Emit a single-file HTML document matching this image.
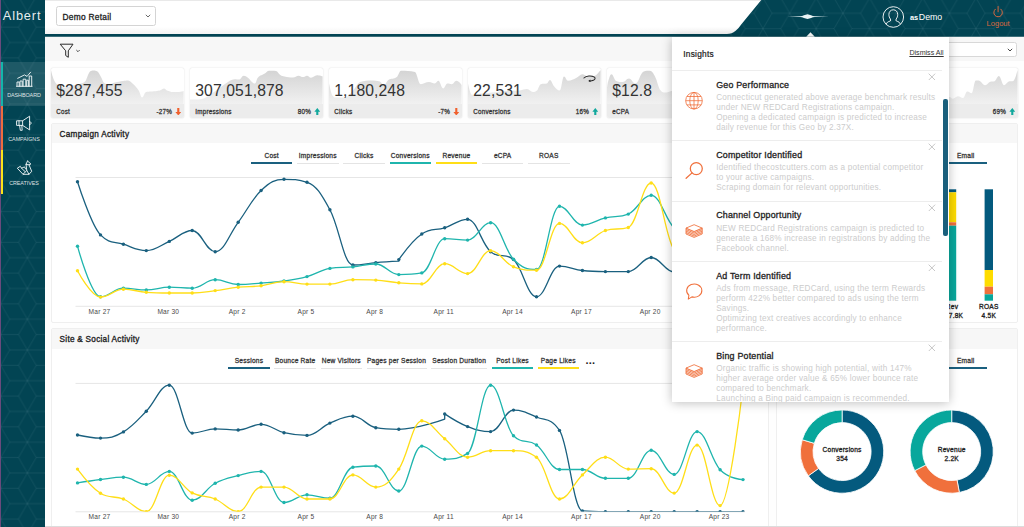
<!DOCTYPE html><html><head><meta charset="utf-8"><title>Albert</title><style>
*{box-sizing:border-box;margin:0;padding:0}
html,body{width:1024px;height:527px;overflow:hidden;background:#fefefe;font-family:"Liberation Sans",sans-serif;color:#222}
.abs{position:absolute}
#side{position:absolute;left:0;top:0;width:45px;height:527px;background:#024453}
#side .strip{position:absolute;left:0;top:0;width:0.9px;height:527px;background:#6a4a7c}
.nav{position:absolute;left:0;width:45px;height:44px}
.nav .bar{position:absolute;left:0.7px;top:0;width:2.7px;height:44px}
.nav .nl{position:absolute;left:3px;width:42px;text-align:center;top:30.2px;font-size:5.4px;line-height:6px;color:rgba(255,255,255,0.86);letter-spacing:-0.05px}
.nav svg{position:absolute;left:14.5px;top:9px;width:19px;height:19px}
#logo{position:absolute;left:2.8px;top:8.7px;font-size:12.8px;line-height:14px;color:rgba(255,255,255,0.92);letter-spacing:0.85px}
#hdr{position:absolute;left:45px;top:0;width:979px;height:37px;background:linear-gradient(#fff 0,#fff 26px,#f1f1f1 34px);border-top:1px solid #e9e9e9}
#hbar{position:absolute;left:45px;top:33.6px;width:700px;height:3px;background:#024453}
#sel1{position:absolute;left:56px;top:6.3px;width:100px;height:19.5px;border:1px solid #d4d4d4;border-radius:2.5px;background:#fff;font-size:8.35px;font-weight:normal;-webkit-text-stroke:0.3px;letter-spacing:0.28px;line-height:20px;padding-left:5.5px;color:#222}
#sel2{position:absolute;left:930px;top:42px;width:86.5px;height:14.5px;border:1px solid #d8d8d8;border-radius:2.5px;background:#fff}
#fbar{position:absolute;left:45px;top:37px;width:979px;height:24.2px;background:#f7f7f7}
.card{position:absolute;top:67.5px;width:132.6px;height:50.5px;background:#fff;border-radius:2px;overflow:hidden;box-shadow:0 0 1.5px rgba(0,0,0,.18)}
.card .sp{position:absolute;left:0;top:0;width:132.6px;height:36px}
.card .ft{position:absolute;left:0;top:36.2px;width:100%;height:14.5px;background:#ececec}
.card .val{position:absolute;left:5.3px;top:14.7px;font-size:15.7px;line-height:18px;color:#333;letter-spacing:0.1px}
.card .lb{position:absolute;left:5.3px;top:4.5px;font-size:6.3px;font-weight:normal;-webkit-text-stroke:0.27px;letter-spacing:0.21px;color:#333;line-height:8px}
.card .pc{position:absolute;right:11.5px;top:4.5px;font-size:6.3px;font-weight:normal;-webkit-text-stroke:0.27px;letter-spacing:0.21px;color:#333;line-height:8px}
.card .ar{position:absolute;right:1.6px;top:4.1px;width:6.6px;height:7.5px}
.card .redo{position:absolute;left:114.5px;top:7px;width:13px;height:7.5px}
.panel{position:absolute;background:#fff;border:1px solid #efefef;border-radius:2px}
.panel .ph{position:absolute;left:0;top:0;right:0;height:19.5px;background:#f7f7f7;font-size:8.2px;font-weight:normal;-webkit-text-stroke:0.32px;letter-spacing:0.27px;line-height:21px;padding-left:8px;color:#222}
.tab{position:absolute;height:15.3px;text-align:center;font-size:6.6px;font-weight:normal;-webkit-text-stroke:0.27px;letter-spacing:0.22px;color:#333;line-height:13px;border-bottom:1px solid #e4e4e4;white-space:nowrap}
.tab.on{border-bottom-width:2.1px;border-bottom-style:solid}
svg text{font-family:"Liberation Sans",sans-serif}
#pop{position:absolute;left:671.7px;top:36.5px;width:277.8px;height:365.5px;background:#fff;box-shadow:0 1px 10px rgba(0,0,0,.26);overflow:hidden}
#pop .pt{position:absolute;left:11.5px;top:12px;font-size:8.3px;font-weight:normal;-webkit-text-stroke:0.22px;letter-spacing:0.27px;color:#222;line-height:10px}
#pop .da{position:absolute;right:5.8px;top:12.9px;font-size:7.1px;color:#333;text-decoration:underline;line-height:9px}
#pop .list{position:absolute;left:0;top:33.5px;width:270.3px;height:340px;border-top:1px solid #ededed}
.it{position:absolute;left:0;width:270.3px;border-bottom:1px solid #ededed}
.it .ic{position:absolute;left:12px;top:19.5px;width:20px;height:20px}
.it .x{position:absolute;left:256.4px;top:1.5px;width:7.8px;height:7.8px}
.it .x svg{width:7.8px;height:7.8px;display:block}
.it .tt{position:absolute;left:44.5px;top:7.8px;font-size:8.9px;font-weight:normal;-webkit-text-stroke:0.3px;color:#222;line-height:12px;letter-spacing:0.2px}
.it .ds{position:absolute;left:44.5px;top:22px;font-size:8.2px;line-height:10px;color:#cccccc;white-space:nowrap;letter-spacing:0.21px}
#sb{position:absolute;left:271.8px;top:62.5px;width:4.2px;height:137px;background:#1a5f7c;border-radius:2px}
</style></head><body><svg width="0" height="0" style="position:absolute"><defs><linearGradient id="spg" x1="0" y1="0" x2="0" y2="1"><stop offset="0" stop-color="#d4d4d4"/><stop offset="1" stop-color="#f1f1f1"/></linearGradient></defs></svg><div id="hdr"></div><div id="fbar"></div><svg class="abs" style="left:0;top:0" width="1024" height="38"><defs><pattern id="hp2" patternUnits="userSpaceOnUse" width="53.250" height="30.744" patternTransform="translate(842.90 13.30)"><path d="M0.00 0.00 L17.75 0.00 M0.00 0.00 L8.88 15.37 M0.00 0.00 L-8.87 15.37 M0.00 0.00 L-17.75 0.00 M0.00 0.00 L-8.88 -15.37 M0.00 0.00 L8.88 -15.37 M53.25 0.00 L71.00 0.00 M53.25 0.00 L62.12 15.37 M53.25 0.00 L44.38 15.37 M53.25 0.00 L35.50 0.00 M53.25 0.00 L44.37 -15.37 M53.25 0.00 L62.12 -15.37 M0.00 30.74 L17.75 30.74 M0.00 30.74 L8.88 46.12 M0.00 30.74 L-8.87 46.12 M0.00 30.74 L-17.75 30.74 M0.00 30.74 L-8.88 15.37 M0.00 30.74 L8.88 15.37 M53.25 30.74 L71.00 30.74 M53.25 30.74 L62.12 46.12 M53.25 30.74 L44.38 46.12 M53.25 30.74 L35.50 30.74 M53.25 30.74 L44.37 15.37 M53.25 30.74 L62.12 15.37 M26.62 15.37 L44.38 15.37 M26.62 15.37 L35.50 30.74 M26.62 15.37 L17.75 30.74 M26.62 15.37 L8.88 15.37 M26.62 15.37 L17.75 0.00 M26.62 15.37 L35.50 0.00 " stroke="#8fb8c0" stroke-opacity="0.2" stroke-width="0.55" fill="none"/></pattern></defs><path id="hshape" d="M761.3 0 L1024 0 L1024 36.8 L45 36.8 L45 34 L727 34 C734 34 737.5 29.5 741.6 24 Z" fill="#024453"/><path d="M761.3 0 L1024 0 L1024 36.8 L727 36.8 L727 34 C734 34 737.5 29.5 741.6 24 Z" fill="url(#hp2)"/><path d="M806.2 36.8 L810.5 32.3 L814.8 36.8 Z" fill="#fff"/><path d="M787.5 16.6 L800 16.2 C803 16 805 14.6 807.5 14.2 C810 14.6 812 16 815 16.2 L829 16.6 L815 17.1 C812 17.3 810 18.7 807.5 19.1 C805 18.7 803 17.3 800 17.1 Z" fill="#e9f3f5"/><g fill="none" stroke="#fff" stroke-width="0.9"><circle cx="893.3" cy="17" r="10.3"/><path d="M886.3 24.3c0.3-2 1.8-2.6 4-3.3 0.5-0.5 0.5-1.3 0.1-2-1-1.3-1.5-2.8-1.5-4.5 0-2.7 1.7-4.7 4.4-4.7s4.4 2 4.4 4.7c0 1.7-0.5 3.2-1.5 4.5-0.4 0.7-0.4 1.5 0.1 2 2.2 0.7 3.7 1.3 4 3.3"/></g><text x="909.9" y="19.9" font-size="7.4" font-weight="bold" fill="#fff" letter-spacing="-0.1">as</text><text x="918.8" y="19.9" font-size="8.8" fill="#fff">Demo</text><g fill="none" stroke="#d9683f" stroke-width="1" stroke-linecap="round"><path d="M995.3 9.2a4.3 4.3 0 1 0 5.6 0M998.1 6.5v5.3"/></g><text x="998.1" y="26" font-size="7.6" fill="#d9683f" text-anchor="middle">Logout</text></svg><div id="sel1">Demo Retail<svg class="abs" style="left:88px;top:6.5px" width="6" height="4" viewBox="0 0 6 4"><path d="M0.8 0.8L3 3l2.2-2.2" fill="none" stroke="#444" stroke-width="0.8"/></svg></div><div id="sel2"><svg class="abs" style="left:76.3px;top:5px" width="6" height="4" viewBox="0 0 6 4"><path d="M0.8 0.8L3 3l2.2-2.2" fill="none" stroke="#333" stroke-width="0.9"/></svg></div><svg class="abs" style="left:58.2px;top:41.6px" width="26" height="18" viewBox="0 0 26 18"><path d="M2.2 2.2h12.8L10.3 8.8v6.5L7.7 13.5V8.8z" fill="none" stroke="#2a2a2a" stroke-width="1" stroke-linejoin="round"/><path d="M18.3 8l1.7 1.7 1.7-1.7" fill="none" stroke="#333" stroke-width="0.85"/></svg><div id="side"><svg class="abs" style="left:0;top:0" width="45" height="527"><defs><pattern id="hp1" patternUnits="userSpaceOnUse" width="53.250" height="30.744" patternTransform="translate(27.40 11.80)"><path d="M0.00 0.00 L17.75 0.00 M0.00 0.00 L8.88 15.37 M0.00 0.00 L-8.87 15.37 M0.00 0.00 L-17.75 0.00 M0.00 0.00 L-8.88 -15.37 M0.00 0.00 L8.88 -15.37 M53.25 0.00 L71.00 0.00 M53.25 0.00 L62.12 15.37 M53.25 0.00 L44.38 15.37 M53.25 0.00 L35.50 0.00 M53.25 0.00 L44.37 -15.37 M53.25 0.00 L62.12 -15.37 M0.00 30.74 L17.75 30.74 M0.00 30.74 L8.88 46.12 M0.00 30.74 L-8.87 46.12 M0.00 30.74 L-17.75 30.74 M0.00 30.74 L-8.88 15.37 M0.00 30.74 L8.88 15.37 M53.25 30.74 L71.00 30.74 M53.25 30.74 L62.12 46.12 M53.25 30.74 L44.38 46.12 M53.25 30.74 L35.50 30.74 M53.25 30.74 L44.37 15.37 M53.25 30.74 L62.12 15.37 M26.62 15.37 L44.38 15.37 M26.62 15.37 L35.50 30.74 M26.62 15.37 L17.75 30.74 M26.62 15.37 L8.88 15.37 M26.62 15.37 L17.75 0.00 M26.62 15.37 L35.50 0.00 " stroke="#8fb8c0" stroke-opacity="0.2" stroke-width="0.55" fill="none"/></pattern></defs><rect width="45" height="527" fill="url(#hp1)"/></svg><div class="strip"></div><div id="logo">Albert</div><div class="nav" style="top:61.5px;background:rgba(255,255,255,0.115);"><div class="bar" style="background:#13b5ab"></div><div class="nl">DASHBOARD</div></div><div class="nav" style="top:105.5px;"><div class="bar" style="background:#ee6c3f"></div><div class="nl">CAMPAIGNS</div></div><div class="nav" style="top:149.5px;"><div class="bar" style="background:#fde21a"></div><div class="nl">CREATIVES</div></div><svg class="abs" style="left:0;top:0" width="45" height="200"><g fill="none" stroke="#f2f7f8" stroke-width="0.92" stroke-linejoin="round" stroke-linecap="round"><path d="M17 86.1V82h2.2v4.1M20 86.1V81h2.2v5.1M23.1 86.1V79.2h2.7v6.9M26.7 86.1V80.2h1.7v5.9M29.2 86.1V76h2.5v10.1M16.5 86.3h15.6"/><path d="M17.7 78.3L24.5 74.9L27.1 76.4L30.6 72.2"/><path d="M17 120.8h5.6v4.6H17zM19 120.8v4.6M22.6 120.8L29.6 116.2V129.9L22.6 125.4M29.6 121.6c2.2 0.2 2.2 2.8 0 3M19.6 125.4l0.7 4.9h1.9l-0.4-4.9"/><path d="M27.5 161L30.9 164L29 164.8L31.7 171.3L29 174.3L23 174.3L17.3 168.2L20.3 166.3L21.5 168.2L24.5 166.9L25.6 169M27.5 161L26 164.4L26.8 170.5L23 174.3M26.8 170.5L29 174.3M26 164.4L29 164.8M21.5 168.2L25 171.5"/></g></svg></div><div class="card" style="left:51px"><svg class="sp" viewBox="0 0 132.6 36" preserveAspectRatio="none"><path d="M0 36 L0.0 2.0 C0.0 2.0 0.9 6.2 1.5 8.0 C2.5 11.0 3.0 12.5 4.0 14.0 C5.6 16.3 6.4 16.6 8.0 17.5 C10.4 18.8 11.6 19.5 14.0 19.5 C17.2 19.5 18.8 18.3 22.0 17.5 C25.2 16.7 26.8 16.7 30.0 15.5 C31.8 14.9 32.7 15.2 34.5 13.0 C35.5 11.8 36.0 9.1 37.0 7.0 C37.8 5.3 38.2 4.5 39.0 3.5 C40.4 2.5 41.1 2.5 42.5 2.5 C44.1 2.5 44.9 2.5 46.5 3.5 C47.9 4.5 48.6 6.5 50.0 9.0 C51.2 11.1 51.8 13.5 53.0 15.0 C55.0 16.5 56.0 16.5 58.0 16.5 C60.4 16.5 61.6 15.1 64.0 14.5 C67.2 13.7 68.8 13.5 72.0 13.0 C74.0 12.7 75.0 12.5 77.0 12.5 C78.6 12.5 79.4 13.7 81.0 15.0 C82.6 16.3 83.4 17.2 85.0 19.0 C86.2 20.4 86.8 20.9 88.0 23.0 C89.2 25.1 89.8 29.5 91.0 29.5 C92.6 29.5 93.4 24.5 95.0 24.0 C97.0 23.5 98.0 23.7 100.0 23.5 C102.4 23.3 103.6 23.4 106.0 23.0 C107.6 22.8 108.4 22.6 110.0 22.0 C111.2 21.6 111.8 20.5 113.0 20.5 C114.2 20.5 114.8 22.0 116.0 22.5 C118.4 23.4 119.6 24.0 122.0 24.0 C124.4 24.0 125.6 24.0 128.0 24.0 C129.8 24.0 132.6 23.0 132.6 23.0 L132.6 36 Z" fill="url(#spg)"/></svg><div class="val">$287,455</div><div class="ft"><span class="lb">Cost</span><span class="pc">-27%</span><svg class="ar" viewBox="0 0 10 12"><path d="M3.3 0h3.4v6.2h3L5 12 0.3 6.2h3z" fill="#f0602d"/></svg></div></div><div class="card" style="left:190px"><svg class="sp" viewBox="0 0 132.6 36" preserveAspectRatio="none"><path d="M0 36 L0.0 31.6 C0.0 31.6 6.0 31.6 10.0 31.2 C15.6 30.8 18.4 27.4 24.0 24.0 C29.6 20.6 32.4 17.4 38.0 14.0 C40.8 12.3 42.2 11.3 45.0 11.3 C46.6 11.3 47.4 11.6 49.0 11.6 C50.9 11.6 51.8 7.7 53.7 7.7 C55.4 7.7 56.3 8.5 58.0 9.8 C59.6 11.0 60.4 12.7 62.0 14.0 C63.2 15.0 63.8 15.5 65.0 15.5 C66.1 15.5 66.7 10.9 67.8 9.8 C70.6 7.0 72.0 7.4 74.8 5.6 C76.5 4.6 77.3 2.8 79.0 2.8 C81.8 2.8 83.2 2.8 86.0 3.0 C87.7 3.2 88.6 5.9 90.3 7.0 C92.0 8.1 92.8 8.1 94.5 8.4 C97.9 9.1 99.6 9.6 103.0 9.6 C105.2 9.6 106.4 7.7 108.6 7.7 C110.4 7.7 111.2 9.1 113.0 9.1 C114.6 9.1 115.4 7.7 117.0 7.7 C118.6 7.7 119.4 9.8 121.0 9.8 C123.4 9.8 124.6 7.3 127.0 7.3 C129.2 7.3 132.6 8.4 132.6 8.4 L132.6 36 Z" fill="url(#spg)"/></svg><div class="val">307,051,878</div><div class="ft"><span class="lb">Impressions</span><span class="pc">80%</span><svg class="ar" viewBox="0 0 10 12"><path d="M3.3 12h3.4V5.8h3L5 0 0.3 5.8h3z" fill="#12a89d"/></svg></div></div><div class="card" style="left:329px"><svg class="sp" viewBox="0 0 132.6 36" preserveAspectRatio="none"><path d="M0 36 L0.0 15.5 C0.0 15.5 1.8 23.9 3.0 26.7 C4.7 29.5 5.6 29.5 7.3 29.5 C10.7 29.5 12.3 29.5 15.7 29.5 C19.0 29.5 20.7 25.9 24.0 22.5 C26.8 19.7 28.2 15.6 31.0 14.0 C35.6 12.4 37.9 12.4 42.5 12.4 C45.9 12.4 47.6 12.4 51.0 13.4 C52.6 14.4 53.4 16.9 55.0 16.9 C56.8 16.9 57.6 13.1 59.4 12.0 C62.8 10.0 64.4 11.6 67.8 9.1 C69.5 7.9 70.3 2.8 72.0 2.8 C77.6 2.8 80.4 2.8 86.0 3.9 C88.3 5.0 89.4 16.2 91.7 16.2 C95.0 16.2 96.7 14.0 100.0 14.0 C102.3 14.0 103.5 15.5 105.8 15.5 C107.2 15.5 107.9 12.7 109.3 12.7 C111.3 12.7 112.2 20.4 114.2 20.4 C115.9 20.4 116.7 15.5 118.4 15.5 C120.1 15.5 120.9 16.2 122.6 16.2 C124.6 16.2 125.6 12.7 127.6 12.7 C129.6 12.7 132.6 16.9 132.6 16.9 L132.6 36 Z" fill="url(#spg)"/></svg><div class="val">1,180,248</div><div class="ft"><span class="lb">Clicks</span><span class="pc">-7%</span><svg class="ar" viewBox="0 0 10 12"><path d="M3.3 0h3.4v6.2h3L5 12 0.3 6.2h3z" fill="#f0602d"/></svg></div></div><div class="card" style="left:468px"><svg class="sp" viewBox="0 0 132.6 36" preserveAspectRatio="none"><path d="M0 36 L0.0 15.5 C0.0 15.5 2.3 26.7 3.8 26.7 C6.3 26.7 7.5 26.3 10.0 26.0 C15.6 25.4 18.4 25.2 24.0 24.6 C29.6 24.0 32.4 23.4 38.0 23.0 C43.6 22.6 46.4 23.0 52.0 22.5 C54.8 22.0 56.2 21.0 59.0 21.0 C61.4 21.0 62.6 24.0 65.0 24.0 C66.6 24.0 67.4 24.0 69.0 22.5 C70.5 21.0 71.2 16.9 72.7 16.2 C75.2 15.5 76.5 16.2 79.0 15.5 C80.2 14.8 80.7 12.0 81.9 12.0 C83.5 12.0 84.4 16.5 86.0 18.3 C88.3 20.7 89.4 22.5 91.7 22.5 C93.4 22.5 94.3 8.4 96.0 8.4 C97.6 8.4 98.4 12.7 100.0 12.7 C103.4 12.7 105.2 11.4 108.6 9.8 C110.8 8.8 112.0 6.3 114.2 6.3 C116.4 6.3 117.6 8.4 119.8 8.4 C122.7 8.4 124.1 8.4 127.0 7.7 C129.2 7.0 132.6 2.1 132.6 2.1 L132.6 36 Z" fill="url(#spg)"/></svg><div class="val">22,531</div><svg class="redo" viewBox="0 0 14 8"><path d="M1 3.2C3.5 0.6 9 0.2 12.3 2.2c1.4 1 0.6 2.8-1.2 3.5-1.2 0.5-2.8 0.7-4 0.6" fill="none" stroke="#222" stroke-width="1.1" stroke-linecap="round"/><path d="M5.6 6.3l2.3-1.5 0.2 2.8z" fill="#222"/></svg><div class="ft"><span class="lb">Conversions</span><span class="pc">16%</span><svg class="ar" viewBox="0 0 10 12"><path d="M3.3 12h3.4V5.8h3L5 0 0.3 5.8h3z" fill="#12a89d"/></svg></div></div><div class="card" style="left:607px"><svg class="sp" viewBox="0 0 132.6 36" preserveAspectRatio="none"><path d="M0 36 L0.0 20.0 C0.0 20.0 0.6 15.2 1.0 14.0 C2.4 9.7 3.1 6.3 4.5 6.3 C6.2 6.3 7.0 11.4 8.7 12.7 C11.5 14.0 13.0 14.0 15.8 14.0 C18.3 14.0 19.5 10.5 22.0 10.5 C24.6 10.5 25.8 15.5 28.4 15.5 C31.8 15.5 33.4 4.2 36.8 3.5 C39.1 2.8 40.2 2.8 42.5 2.8 C44.7 2.8 45.8 4.5 48.0 8.4 C50.3 12.4 51.4 20.4 53.7 22.5 C55.4 24.6 56.3 24.6 58.0 24.6 C60.2 24.6 61.4 23.7 63.6 23.2 C70.2 21.8 73.4 21.5 80.0 20.0 C88.0 18.2 92.0 16.2 100.0 15.0 C113.0 13.0 132.6 12.0 132.6 12.0 L132.6 36 Z" fill="url(#spg)"/></svg><div class="val">$12.8</div><div class="ft"><span class="lb">eCPA</span><span class="pc"></span></div></div><div class="card" style="left:746px"><svg class="sp" viewBox="0 0 132.6 36" preserveAspectRatio="none"><path d="M0 36 L0.0 20.0 C0.0 20.0 18.0 15.0 30.0 15.0 C42.0 15.0 48.0 18.0 60.0 18.0 C72.0 18.0 78.0 10.0 90.0 10.0 C107.0 10.0 132.6 12.0 132.6 12.0 L132.6 36 Z" fill="url(#spg)"/></svg><div class="val"></div><div class="ft"><span class="lb"></span><span class="pc"></span></div></div><div class="card" style="left:885px"><svg class="sp" viewBox="0 0 132.6 36" preserveAspectRatio="none"><path d="M0 36 L0.0 32.0 C0.0 32.0 12.0 31.6 20.0 31.0 C28.0 30.4 32.0 29.0 40.0 29.0 C46.0 29.0 49.0 30.0 55.0 30.0 C58.8 30.0 60.6 29.1 64.4 29.1 C65.8 29.1 66.4 30.8 67.8 30.8 C69.8 30.8 70.9 28.3 72.9 28.3 C74.9 28.3 76.0 30.0 78.0 30.0 C79.7 30.0 80.6 23.5 82.3 23.5 C84.0 23.5 84.9 25.2 86.6 25.2 C88.3 25.2 89.1 12.5 90.8 12.5 C91.8 12.5 92.4 12.5 93.4 12.5 C96.1 12.5 97.5 17.2 100.2 17.2 C102.2 17.2 103.3 14.2 105.3 13.7 C107.0 13.2 107.9 13.7 109.6 13.2 C111.3 12.7 112.2 8.1 113.9 8.1 C115.9 8.1 117.0 17.2 119.0 17.2 C120.7 17.2 121.6 14.5 123.3 13.7 C125.3 12.9 126.4 13.7 128.4 12.9 C129.4 12.1 130.0 10.5 131.0 7.8 C131.6 6.1 132.6 1.8 132.6 1.8 L132.6 36 Z" fill="url(#spg)"/></svg><div class="val"></div><div class="ft"><span class="lb"></span><span class="pc">69%</span><svg class="ar" viewBox="0 0 10 12"><path d="M3.3 12h3.4V5.8h3L5 0 0.3 5.8h3z" fill="#12a89d"/></svg></div></div><div class="panel" style="left:50.6px;top:122.7px;width:718.9px;height:200.2px"><div class="ph">Campaign Activity</div></div><div class="panel" style="left:775.5px;top:122.7px;width:242.4px;height:200.2px"><div class="ph"></div></div><div class="panel" style="left:50.6px;top:328px;width:718.9px;height:204px"><div class="ph">Site &amp; Social Activity</div></div><div class="panel" style="left:775.5px;top:328px;width:242.4px;height:204px"><div class="ph"></div></div><div class="tab on" style="left:251.0px;width:41.4px;top:148.8px;border-bottom-color:#1a607f;">Cost</div><div class="tab" style="left:297.0px;width:41.5px;top:148.8px;">Impressions</div><div class="tab" style="left:343.3px;width:41.5px;top:148.8px;">Clicks</div><div class="tab on" style="left:389.5px;width:41.5px;top:148.8px;border-bottom-color:#1fb5ad;">Conversions</div><div class="tab on" style="left:435.7px;width:41.5px;top:148.8px;border-bottom-color:#ffde17;">Revenue</div><div class="tab" style="left:482.0px;width:41.4px;top:148.8px;">eCPA</div><div class="tab" style="left:528.0px;width:41.6px;top:148.8px;">ROAS</div><div class="tab on" style="left:228.4px;width:41.2px;top:354.2px;border-bottom-color:#1a607f;">Sessions</div><div class="tab" style="left:274.0px;width:42.3px;top:354.2px;">Bounce Rate</div><div class="tab" style="left:320.6px;width:41.4px;top:354.2px;">New Visitors</div><div class="tab" style="left:366.5px;width:60.0px;top:354.2px;">Pages per Session</div><div class="tab" style="left:431.0px;width:56.3px;top:354.2px;">Session Duration</div><div class="tab on" style="left:492.0px;width:41.0px;top:354.2px;border-bottom-color:#1fb5ad;">Post Likes</div><div class="tab on" style="left:537.5px;width:41.5px;top:354.2px;border-bottom-color:#ffde17;">Page Likes</div><div class="abs" style="left:585.5px;top:354.5px;font-size:11px;font-weight:bold;letter-spacing:0.2px;line-height:10px;color:#222">...</div><div class="tab on" style="left:945.0px;width:41.5px;top:148.8px;border-bottom-color:#1a607f;">Email</div><div class="tab on" style="left:945.0px;width:41.5px;top:354.2px;border-bottom-color:#1a607f;">Email</div><svg class="abs" style="left:0;top:0" width="1024" height="527" font-size="6.6" fill="#444" letter-spacing="0.22"><path d="M75.5 177.5H745M75.5 306.3H745M75.5 383.4H745M75.5 511.8H745" stroke="#e6e6e6" stroke-width="1" fill="none"/><g letter-spacing="0.22" fill="#4a4a4a"><text x="99.5" y="313.8" text-anchor="middle">Mar 27</text><text x="168.3" y="313.8" text-anchor="middle">Mar 30</text><text x="237.2" y="313.8" text-anchor="middle">Apr 2</text><text x="306.0" y="313.8" text-anchor="middle">Apr 5</text><text x="374.8" y="313.8" text-anchor="middle">Apr 8</text><text x="443.7" y="313.8" text-anchor="middle">Apr 11</text><text x="512.5" y="313.8" text-anchor="middle">Apr 14</text><text x="581.4" y="313.8" text-anchor="middle">Apr 17</text><text x="650.2" y="313.8" text-anchor="middle">Apr 20</text><text x="719.1" y="313.8" text-anchor="middle">Apr 23</text><text x="99.5" y="519.0" text-anchor="middle">Mar 27</text><text x="168.3" y="519.0" text-anchor="middle">Mar 30</text><text x="237.2" y="519.0" text-anchor="middle">Apr 2</text><text x="306.0" y="519.0" text-anchor="middle">Apr 5</text><text x="374.8" y="519.0" text-anchor="middle">Apr 8</text><text x="443.7" y="519.0" text-anchor="middle">Apr 11</text><text x="512.5" y="519.0" text-anchor="middle">Apr 14</text><text x="581.4" y="519.0" text-anchor="middle">Apr 17</text><text x="650.2" y="519.0" text-anchor="middle">Apr 20</text><text x="719.1" y="519.0" text-anchor="middle">Apr 23</text></g><clipPath id="cl2"><rect x="70" y="380" width="690" height="131.5"/></clipPath><path d="M77.5 181.7 C77.5 181.7 91.3 225.6 100.5 234.9 C109.6 244.2 114.2 241.1 123.4 244.2 C132.6 247.3 137.2 250.6 146.3 250.6 C155.5 250.6 160.1 245.4 169.3 241.4 C178.5 237.4 183.1 230.5 192.2 230.5 C201.4 230.5 206.0 251.7 215.2 251.7 C224.4 251.7 229.0 234.5 238.2 222.3 C247.3 210.1 251.9 199.1 261.1 190.5 C270.3 181.9 274.9 179.3 284.0 179.3 C293.2 179.3 297.8 179.3 307.0 182.3 C316.2 185.3 320.8 193.2 329.9 209.7 C339.1 226.2 343.7 265.0 352.9 265.0 C362.1 265.0 366.7 263.5 375.8 262.7 C385.0 261.9 398.8 261.2 398.8 261.2 L398.8 259.6 C398.8 259.6 412.6 240.2 421.8 234.0 C430.9 227.8 435.5 230.7 444.7 227.8 C453.9 224.9 458.5 219.3 467.6 219.3 C476.8 219.3 481.4 243.8 490.6 251.7 C499.8 259.6 504.4 251.7 513.5 259.6 C522.7 267.5 527.3 296.8 536.5 296.8 C545.7 296.8 550.3 266.1 559.5 266.1 C568.6 266.1 573.2 269.4 582.4 270.5 C591.6 271.6 596.2 271.6 605.4 271.6 C614.5 271.6 619.1 271.6 628.3 271.6 C637.5 271.6 642.1 257.5 651.2 257.5 C660.4 257.5 665.0 272.0 674.2 272.0 C683.4 272.0 688.0 270.0 697.1 268.0 C706.3 266.0 710.9 262.0 720.1 262.0 C729.3 262.0 743.0 266.0 743.0 266.0" fill="none" stroke="#1a607f" stroke-width="1.3" stroke-linejoin="round" stroke-linecap="round"/><circle cx="77.5" cy="181.7" r="1.7" fill="#1a607f"/><circle cx="100.5" cy="234.9" r="1.7" fill="#1a607f"/><circle cx="123.4" cy="244.2" r="1.7" fill="#1a607f"/><circle cx="146.3" cy="250.6" r="1.7" fill="#1a607f"/><circle cx="169.3" cy="241.4" r="1.7" fill="#1a607f"/><circle cx="192.2" cy="230.5" r="1.7" fill="#1a607f"/><circle cx="215.2" cy="251.7" r="1.7" fill="#1a607f"/><circle cx="238.2" cy="222.3" r="1.7" fill="#1a607f"/><circle cx="261.1" cy="190.5" r="1.7" fill="#1a607f"/><circle cx="284.0" cy="179.3" r="1.7" fill="#1a607f"/><circle cx="307.0" cy="182.3" r="1.7" fill="#1a607f"/><circle cx="329.9" cy="209.7" r="1.7" fill="#1a607f"/><circle cx="352.9" cy="265.0" r="1.7" fill="#1a607f"/><circle cx="375.8" cy="262.7" r="1.7" fill="#1a607f"/><circle cx="398.8" cy="259.6" r="1.7" fill="#1a607f"/><circle cx="421.8" cy="234.0" r="1.7" fill="#1a607f"/><circle cx="444.7" cy="227.8" r="1.7" fill="#1a607f"/><circle cx="467.6" cy="219.3" r="1.7" fill="#1a607f"/><circle cx="490.6" cy="251.7" r="1.7" fill="#1a607f"/><circle cx="513.5" cy="259.6" r="1.7" fill="#1a607f"/><circle cx="536.5" cy="296.8" r="1.7" fill="#1a607f"/><circle cx="559.5" cy="266.1" r="1.7" fill="#1a607f"/><circle cx="582.4" cy="270.5" r="1.7" fill="#1a607f"/><circle cx="605.4" cy="271.6" r="1.7" fill="#1a607f"/><circle cx="628.3" cy="271.6" r="1.7" fill="#1a607f"/><circle cx="651.2" cy="257.5" r="1.7" fill="#1a607f"/><circle cx="674.2" cy="272.0" r="1.7" fill="#1a607f"/><circle cx="697.1" cy="268.0" r="1.7" fill="#1a607f"/><circle cx="720.1" cy="262.0" r="1.7" fill="#1a607f"/><circle cx="743.0" cy="266.0" r="1.7" fill="#1a607f"/><path d="M77.5 246.2 C77.5 246.2 91.3 296.8 100.5 296.8 C109.6 296.8 114.2 288.2 123.4 288.2 C132.6 288.2 137.2 289.9 146.3 289.9 C155.5 289.9 160.1 287.2 169.3 287.2 C178.5 287.2 183.1 288.2 192.2 288.2 C201.4 288.2 206.0 279.7 215.2 279.7 C224.4 279.7 229.0 284.5 238.2 284.5 C247.3 284.5 251.9 283.8 261.1 283.1 C270.3 282.4 274.9 282.3 284.0 281.0 C293.2 279.7 297.8 279.1 307.0 276.6 C316.2 274.1 320.8 269.9 329.9 268.4 C339.1 266.9 343.7 267.8 352.9 266.9 C362.1 266.0 366.7 264.0 375.8 264.0 C385.0 264.0 389.6 274.6 398.8 274.6 C408.0 274.6 412.6 274.6 421.8 272.9 C430.9 271.2 435.5 238.7 444.7 238.7 C453.9 238.7 458.5 240.1 467.6 240.1 C476.8 240.1 481.4 222.7 490.6 222.7 C499.8 222.7 504.4 249.9 513.5 259.3 C522.7 268.7 527.3 269.5 536.5 269.5 C545.7 269.5 550.3 206.3 559.5 206.3 C568.6 206.3 573.2 225.1 582.4 225.1 C591.6 225.1 596.2 220.1 605.4 217.9 C614.5 215.7 619.1 217.9 628.3 214.1 C637.5 210.3 642.1 195.3 651.2 195.3 C660.4 195.3 665.0 219.1 674.2 228.0 C683.4 236.9 688.0 240.0 697.1 240.0 C706.3 240.0 710.9 232.0 720.1 232.0 C729.3 232.0 743.0 236.0 743.0 236.0" fill="none" stroke="#1fb5ad" stroke-width="1.3" stroke-linejoin="round" stroke-linecap="round"/><circle cx="77.5" cy="246.2" r="1.7" fill="#1fb5ad"/><circle cx="100.5" cy="296.8" r="1.7" fill="#1fb5ad"/><circle cx="123.4" cy="288.2" r="1.7" fill="#1fb5ad"/><circle cx="146.3" cy="289.9" r="1.7" fill="#1fb5ad"/><circle cx="169.3" cy="287.2" r="1.7" fill="#1fb5ad"/><circle cx="192.2" cy="288.2" r="1.7" fill="#1fb5ad"/><circle cx="215.2" cy="279.7" r="1.7" fill="#1fb5ad"/><circle cx="238.2" cy="284.5" r="1.7" fill="#1fb5ad"/><circle cx="261.1" cy="283.1" r="1.7" fill="#1fb5ad"/><circle cx="284.0" cy="281.0" r="1.7" fill="#1fb5ad"/><circle cx="307.0" cy="276.6" r="1.7" fill="#1fb5ad"/><circle cx="329.9" cy="268.4" r="1.7" fill="#1fb5ad"/><circle cx="352.9" cy="266.9" r="1.7" fill="#1fb5ad"/><circle cx="375.8" cy="264.0" r="1.7" fill="#1fb5ad"/><circle cx="398.8" cy="274.6" r="1.7" fill="#1fb5ad"/><circle cx="421.8" cy="272.9" r="1.7" fill="#1fb5ad"/><circle cx="444.7" cy="238.7" r="1.7" fill="#1fb5ad"/><circle cx="467.6" cy="240.1" r="1.7" fill="#1fb5ad"/><circle cx="490.6" cy="222.7" r="1.7" fill="#1fb5ad"/><circle cx="513.5" cy="259.3" r="1.7" fill="#1fb5ad"/><circle cx="536.5" cy="269.5" r="1.7" fill="#1fb5ad"/><circle cx="559.5" cy="206.3" r="1.7" fill="#1fb5ad"/><circle cx="582.4" cy="225.1" r="1.7" fill="#1fb5ad"/><circle cx="605.4" cy="217.9" r="1.7" fill="#1fb5ad"/><circle cx="628.3" cy="214.1" r="1.7" fill="#1fb5ad"/><circle cx="651.2" cy="195.3" r="1.7" fill="#1fb5ad"/><circle cx="674.2" cy="228.0" r="1.7" fill="#1fb5ad"/><circle cx="697.1" cy="240.0" r="1.7" fill="#1fb5ad"/><circle cx="720.1" cy="232.0" r="1.7" fill="#1fb5ad"/><circle cx="743.0" cy="236.0" r="1.7" fill="#1fb5ad"/><path d="M77.5 270.8 C77.5 270.8 91.3 297.1 100.5 297.1 C109.6 297.1 114.2 289.2 123.4 289.2 C132.6 289.2 137.2 291.6 146.3 292.3 C155.5 293.0 160.1 293.0 169.3 293.0 C178.5 293.0 183.1 293.0 192.2 293.0 C201.4 293.0 206.0 291.8 215.2 290.6 C224.4 289.4 229.0 288.2 238.2 287.2 C247.3 286.2 251.9 286.9 261.1 285.8 C270.3 284.7 274.9 281.7 284.0 281.7 C293.2 281.7 297.8 284.1 307.0 284.1 C316.2 284.1 320.8 284.1 329.9 284.1 C339.1 284.1 343.7 279.7 352.9 279.7 C362.1 279.7 366.7 279.7 375.8 280.1 C385.0 280.5 389.6 282.0 398.8 282.8 C408.0 283.6 412.6 283.9 421.8 283.9 C430.9 283.9 435.5 263.7 444.7 263.7 C453.9 263.7 458.5 273.6 467.6 273.6 C476.8 273.6 481.4 250.7 490.6 250.7 C499.8 250.7 504.4 263.4 513.5 266.8 C522.7 270.2 527.3 270.2 536.5 270.2 C545.7 270.2 550.3 223.4 559.5 223.4 C568.6 223.4 573.2 242.8 582.4 242.8 C591.6 242.8 596.2 233.5 605.4 230.5 C614.5 227.5 619.1 230.5 628.3 227.5 C637.5 224.5 642.1 183.0 651.2 183.0 C660.4 183.0 665.0 238.0 674.2 250.0 C683.4 262.0 688.0 262.0 697.1 262.0 C706.3 262.0 710.9 255.0 720.1 255.0 C729.3 255.0 743.0 258.0 743.0 258.0" fill="none" stroke="#ffde17" stroke-width="1.3" stroke-linejoin="round" stroke-linecap="round"/><circle cx="77.5" cy="270.8" r="1.7" fill="#ffde17"/><circle cx="100.5" cy="297.1" r="1.7" fill="#ffde17"/><circle cx="123.4" cy="289.2" r="1.7" fill="#ffde17"/><circle cx="146.3" cy="292.3" r="1.7" fill="#ffde17"/><circle cx="169.3" cy="293.0" r="1.7" fill="#ffde17"/><circle cx="192.2" cy="293.0" r="1.7" fill="#ffde17"/><circle cx="215.2" cy="290.6" r="1.7" fill="#ffde17"/><circle cx="238.2" cy="287.2" r="1.7" fill="#ffde17"/><circle cx="261.1" cy="285.8" r="1.7" fill="#ffde17"/><circle cx="284.0" cy="281.7" r="1.7" fill="#ffde17"/><circle cx="307.0" cy="284.1" r="1.7" fill="#ffde17"/><circle cx="329.9" cy="284.1" r="1.7" fill="#ffde17"/><circle cx="352.9" cy="279.7" r="1.7" fill="#ffde17"/><circle cx="375.8" cy="280.1" r="1.7" fill="#ffde17"/><circle cx="398.8" cy="282.8" r="1.7" fill="#ffde17"/><circle cx="421.8" cy="283.9" r="1.7" fill="#ffde17"/><circle cx="444.7" cy="263.7" r="1.7" fill="#ffde17"/><circle cx="467.6" cy="273.6" r="1.7" fill="#ffde17"/><circle cx="490.6" cy="250.7" r="1.7" fill="#ffde17"/><circle cx="513.5" cy="266.8" r="1.7" fill="#ffde17"/><circle cx="536.5" cy="270.2" r="1.7" fill="#ffde17"/><circle cx="559.5" cy="223.4" r="1.7" fill="#ffde17"/><circle cx="582.4" cy="242.8" r="1.7" fill="#ffde17"/><circle cx="605.4" cy="230.5" r="1.7" fill="#ffde17"/><circle cx="628.3" cy="227.5" r="1.7" fill="#ffde17"/><circle cx="651.2" cy="183.0" r="1.7" fill="#ffde17"/><circle cx="674.2" cy="250.0" r="1.7" fill="#ffde17"/><circle cx="697.1" cy="262.0" r="1.7" fill="#ffde17"/><circle cx="720.1" cy="255.0" r="1.7" fill="#ffde17"/><circle cx="743.0" cy="258.0" r="1.7" fill="#ffde17"/><g clip-path="url(#cl2)"><path d="M77.5 435.0 C77.5 435.0 91.3 438.1 100.5 438.1 C109.6 438.1 114.2 437.3 123.4 431.9 C132.6 426.5 137.2 420.5 146.3 411.2 C155.5 401.9 160.1 385.2 169.3 385.2 C178.5 385.2 183.1 433.1 192.2 433.1 C201.4 433.1 206.0 428.9 215.2 428.9 C224.4 428.9 229.0 430.0 238.2 430.0 C247.3 430.0 251.9 424.3 261.1 424.3 C270.3 424.3 274.9 430.5 284.0 432.7 C293.2 434.9 297.8 435.4 307.0 435.4 C316.2 435.4 320.8 426.9 329.9 423.1 C339.1 419.3 343.7 416.2 352.9 416.2 C362.1 416.2 366.7 426.1 375.8 427.7 C385.0 429.3 389.6 429.3 398.8 429.3 C417.2 429.3 444.7 419.1 444.7 419.1 L444.7 413.9 C444.7 413.9 458.5 423.1 467.6 426.6 C476.8 430.1 481.4 431.6 490.6 431.6 C499.8 431.6 504.4 410.1 513.5 410.1 C522.7 410.1 527.3 412.9 536.5 417.0 C545.7 421.1 550.3 417.0 559.5 430.4 C568.6 443.8 573.2 510.1 582.4 510.9 C591.6 511.7 596.2 511.7 605.4 511.7 C614.5 511.7 619.1 511.7 628.3 511.7 C637.5 511.7 642.1 511.7 651.2 511.7 C660.4 511.7 665.0 511.7 674.2 511.7 C683.4 511.7 688.0 511.7 697.1 511.7 C706.3 511.7 710.9 511.7 720.1 511.7 C729.3 511.7 743.0 511.7 743.0 511.7" fill="none" stroke="#1a607f" stroke-width="1.3" stroke-linejoin="round" stroke-linecap="round"/><circle cx="77.5" cy="435.0" r="1.7" fill="#1a607f"/><circle cx="100.5" cy="438.1" r="1.7" fill="#1a607f"/><circle cx="123.4" cy="431.9" r="1.7" fill="#1a607f"/><circle cx="146.3" cy="411.2" r="1.7" fill="#1a607f"/><circle cx="169.3" cy="385.2" r="1.7" fill="#1a607f"/><circle cx="192.2" cy="433.1" r="1.7" fill="#1a607f"/><circle cx="215.2" cy="428.9" r="1.7" fill="#1a607f"/><circle cx="238.2" cy="430.0" r="1.7" fill="#1a607f"/><circle cx="261.1" cy="424.3" r="1.7" fill="#1a607f"/><circle cx="284.0" cy="432.7" r="1.7" fill="#1a607f"/><circle cx="307.0" cy="435.4" r="1.7" fill="#1a607f"/><circle cx="329.9" cy="423.1" r="1.7" fill="#1a607f"/><circle cx="352.9" cy="416.2" r="1.7" fill="#1a607f"/><circle cx="375.8" cy="427.7" r="1.7" fill="#1a607f"/><circle cx="398.8" cy="429.3" r="1.7" fill="#1a607f"/><circle cx="444.7" cy="413.9" r="1.7" fill="#1a607f"/><circle cx="467.6" cy="426.6" r="1.7" fill="#1a607f"/><circle cx="490.6" cy="431.6" r="1.7" fill="#1a607f"/><circle cx="513.5" cy="410.1" r="1.7" fill="#1a607f"/><circle cx="536.5" cy="417.0" r="1.7" fill="#1a607f"/><circle cx="559.5" cy="430.4" r="1.7" fill="#1a607f"/><circle cx="582.4" cy="510.9" r="1.7" fill="#1a607f"/><circle cx="605.4" cy="511.7" r="1.7" fill="#1a607f"/><circle cx="628.3" cy="511.7" r="1.7" fill="#1a607f"/><circle cx="651.2" cy="511.7" r="1.7" fill="#1a607f"/><circle cx="674.2" cy="511.7" r="1.7" fill="#1a607f"/><circle cx="697.1" cy="511.7" r="1.7" fill="#1a607f"/><circle cx="720.1" cy="511.7" r="1.7" fill="#1a607f"/><circle cx="743.0" cy="511.7" r="1.7" fill="#1a607f"/><path d="M77.5 482.9 C77.5 482.9 91.3 480.6 100.5 479.5 C109.6 478.4 114.2 477.2 123.4 477.2 C132.6 477.2 137.2 484.4 146.3 484.4 C155.5 484.4 160.1 471.4 169.3 471.4 C178.5 471.4 183.1 500.2 192.2 500.2 C201.4 500.2 206.0 488.2 215.2 483.3 C224.4 478.4 229.0 478.0 238.2 475.6 C247.3 473.2 251.9 471.4 261.1 471.4 C270.3 471.4 274.9 502.5 284.0 502.5 C293.2 502.5 297.8 494.8 307.0 494.8 C316.2 494.8 320.8 498.2 329.9 498.2 C339.1 498.2 343.7 468.4 352.9 467.2 C362.1 466.0 366.7 466.0 375.8 466.0 C385.0 466.0 389.6 491.0 398.8 491.0 C408.0 491.0 412.6 446.1 421.8 446.1 C430.9 446.1 435.5 459.2 444.7 459.2 C453.9 459.2 458.5 459.2 467.6 453.4 C476.8 447.6 481.4 385.2 490.6 385.2 C499.8 385.2 504.4 426.6 513.5 435.8 C522.7 445.0 527.3 438.3 536.5 445.0 C545.7 451.7 550.3 469.5 559.5 469.5 C568.6 469.5 573.2 469.5 582.4 469.5 C591.6 469.5 596.2 478.3 605.4 478.3 C614.5 478.3 619.1 478.3 628.3 478.3 C637.5 478.3 642.1 450.3 651.2 450.3 C660.4 450.3 665.0 474.4 674.2 474.4 C683.4 474.4 688.0 431.6 697.1 431.6 C706.3 431.6 710.9 460.1 720.1 469.7 C729.3 479.3 743.0 479.6 743.0 479.6" fill="none" stroke="#1fb5ad" stroke-width="1.3" stroke-linejoin="round" stroke-linecap="round"/><circle cx="77.5" cy="482.9" r="1.7" fill="#1fb5ad"/><circle cx="100.5" cy="479.5" r="1.7" fill="#1fb5ad"/><circle cx="123.4" cy="477.2" r="1.7" fill="#1fb5ad"/><circle cx="146.3" cy="484.4" r="1.7" fill="#1fb5ad"/><circle cx="169.3" cy="471.4" r="1.7" fill="#1fb5ad"/><circle cx="192.2" cy="500.2" r="1.7" fill="#1fb5ad"/><circle cx="215.2" cy="483.3" r="1.7" fill="#1fb5ad"/><circle cx="238.2" cy="475.6" r="1.7" fill="#1fb5ad"/><circle cx="261.1" cy="471.4" r="1.7" fill="#1fb5ad"/><circle cx="284.0" cy="502.5" r="1.7" fill="#1fb5ad"/><circle cx="307.0" cy="494.8" r="1.7" fill="#1fb5ad"/><circle cx="329.9" cy="498.2" r="1.7" fill="#1fb5ad"/><circle cx="352.9" cy="467.2" r="1.7" fill="#1fb5ad"/><circle cx="375.8" cy="466.0" r="1.7" fill="#1fb5ad"/><circle cx="398.8" cy="491.0" r="1.7" fill="#1fb5ad"/><circle cx="421.8" cy="446.1" r="1.7" fill="#1fb5ad"/><circle cx="444.7" cy="459.2" r="1.7" fill="#1fb5ad"/><circle cx="467.6" cy="453.4" r="1.7" fill="#1fb5ad"/><circle cx="490.6" cy="385.2" r="1.7" fill="#1fb5ad"/><circle cx="513.5" cy="435.8" r="1.7" fill="#1fb5ad"/><circle cx="536.5" cy="445.0" r="1.7" fill="#1fb5ad"/><circle cx="559.5" cy="469.5" r="1.7" fill="#1fb5ad"/><circle cx="582.4" cy="469.5" r="1.7" fill="#1fb5ad"/><circle cx="605.4" cy="478.3" r="1.7" fill="#1fb5ad"/><circle cx="628.3" cy="478.3" r="1.7" fill="#1fb5ad"/><circle cx="651.2" cy="450.3" r="1.7" fill="#1fb5ad"/><circle cx="674.2" cy="474.4" r="1.7" fill="#1fb5ad"/><circle cx="697.1" cy="431.6" r="1.7" fill="#1fb5ad"/><circle cx="720.1" cy="469.7" r="1.7" fill="#1fb5ad"/><circle cx="743.0" cy="479.6" r="1.7" fill="#1fb5ad"/><path d="M77.5 469.1 C77.5 469.1 91.3 487.6 100.5 493.3 C109.6 499.0 114.2 495.3 123.4 499.0 C132.6 502.7 137.2 511.7 146.3 511.7 C155.5 511.7 160.1 475.2 169.3 475.2 C178.5 475.2 183.1 488.1 192.2 492.9 C201.4 497.7 206.0 495.2 215.2 499.0 C224.4 502.8 229.0 511.7 238.2 511.7 C247.3 511.7 251.9 487.1 261.1 487.1 C270.3 487.1 274.9 487.1 284.0 487.1 C293.2 487.1 297.8 499.0 307.0 499.0 C316.2 499.0 320.8 499.0 329.9 499.0 C339.1 499.0 343.7 474.9 352.9 474.9 C362.1 474.9 366.7 487.1 375.8 487.1 C385.0 487.1 389.6 482.4 398.8 469.1 C408.0 455.8 412.6 420.8 421.8 420.8 C430.9 420.8 435.5 431.5 444.7 438.8 C453.9 446.1 458.5 457.2 467.6 457.2 C476.8 457.2 481.4 450.7 490.6 450.7 C499.8 450.7 504.4 450.7 513.5 450.7 C522.7 450.7 527.3 450.7 536.5 457.2 C545.7 463.7 550.3 499.0 559.5 499.0 C568.6 499.0 573.2 483.3 582.4 474.9 C591.6 466.5 596.2 457.2 605.4 457.2 C614.5 457.2 619.1 469.1 628.3 469.1 C637.5 469.1 642.1 468.7 651.2 468.7 C660.4 468.7 665.0 493.1 674.2 493.1 C683.4 493.1 688.0 445.1 697.1 445.1 C706.3 445.1 710.9 505.6 720.1 505.6 C729.3 505.6 743.0 386.5 743.0 386.5" fill="none" stroke="#ffde17" stroke-width="1.3" stroke-linejoin="round" stroke-linecap="round"/><circle cx="77.5" cy="469.1" r="1.7" fill="#ffde17"/><circle cx="100.5" cy="493.3" r="1.7" fill="#ffde17"/><circle cx="123.4" cy="499.0" r="1.7" fill="#ffde17"/><circle cx="146.3" cy="511.7" r="1.7" fill="#ffde17"/><circle cx="169.3" cy="475.2" r="1.7" fill="#ffde17"/><circle cx="192.2" cy="492.9" r="1.7" fill="#ffde17"/><circle cx="215.2" cy="499.0" r="1.7" fill="#ffde17"/><circle cx="238.2" cy="511.7" r="1.7" fill="#ffde17"/><circle cx="261.1" cy="487.1" r="1.7" fill="#ffde17"/><circle cx="284.0" cy="487.1" r="1.7" fill="#ffde17"/><circle cx="307.0" cy="499.0" r="1.7" fill="#ffde17"/><circle cx="329.9" cy="499.0" r="1.7" fill="#ffde17"/><circle cx="352.9" cy="474.9" r="1.7" fill="#ffde17"/><circle cx="375.8" cy="487.1" r="1.7" fill="#ffde17"/><circle cx="398.8" cy="469.1" r="1.7" fill="#ffde17"/><circle cx="421.8" cy="420.8" r="1.7" fill="#ffde17"/><circle cx="444.7" cy="438.8" r="1.7" fill="#ffde17"/><circle cx="467.6" cy="457.2" r="1.7" fill="#ffde17"/><circle cx="490.6" cy="450.7" r="1.7" fill="#ffde17"/><circle cx="513.5" cy="450.7" r="1.7" fill="#ffde17"/><circle cx="536.5" cy="457.2" r="1.7" fill="#ffde17"/><circle cx="559.5" cy="499.0" r="1.7" fill="#ffde17"/><circle cx="582.4" cy="474.9" r="1.7" fill="#ffde17"/><circle cx="605.4" cy="457.2" r="1.7" fill="#ffde17"/><circle cx="628.3" cy="469.1" r="1.7" fill="#ffde17"/><circle cx="651.2" cy="468.7" r="1.7" fill="#ffde17"/><circle cx="674.2" cy="493.1" r="1.7" fill="#ffde17"/><circle cx="697.1" cy="445.1" r="1.7" fill="#ffde17"/><circle cx="720.1" cy="505.6" r="1.7" fill="#ffde17"/><circle cx="743.0" cy="386.5" r="1.7" fill="#ffde17"/></g><rect x="947.7" y="189.3" width="8.5" height="3.0" fill="#045a7e"/><rect x="947.7" y="192.3" width="8.5" height="30.0" fill="#fedc00"/><rect x="947.7" y="222.3" width="8.5" height="3.4" fill="#f0703c"/><rect x="947.7" y="225.7" width="8.5" height="75.0" fill="#08a79c"/><rect x="984.6" y="189.3" width="8.4" height="80.7" fill="#045a7e"/><rect x="984.6" y="270" width="8.4" height="16.7" fill="#fedc00"/><rect x="984.6" y="286.7" width="8.4" height="7.6" fill="#f0703c"/><rect x="984.6" y="294.3" width="8.4" height="6.4" fill="#08a79c"/><g fill="#222" stroke="#222" stroke-width="0.3" text-anchor="middle"><text x="952" y="309.2">Rev</text><text x="956" y="317.9">7.8K</text><text x="988.8" y="309.2">ROAS</text><text x="988.8" y="317.9">4.5K</text><text x="842.1" y="451.7">Conversions</text><text x="842.1" y="460.7">354</text><text x="951.7" y="451.7">Revenue</text><text x="951.7" y="460.7">2.2K</text></g><path d="M842.10 410.00 A41.6 41.6 0 1 1 808.29 475.84 L818.53 468.50 A29 29 0 1 0 842.10 422.60 Z" fill="#045a7e" stroke="#fff" stroke-width="0.8"/><path d="M808.29 475.84 A41.6 41.6 0 0 1 802.23 439.74 L814.30 443.33 A29 29 0 0 0 818.53 468.50 Z" fill="#f0703c" stroke="#fff" stroke-width="0.8"/><path d="M802.23 439.74 A41.6 41.6 0 0 1 842.10 410.00 L842.10 422.60 A29 29 0 0 0 814.30 443.33 Z" fill="#08a79c" stroke="#fff" stroke-width="0.8"/><path d="M951.70 410.00 A41.6 41.6 0 0 1 959.34 492.49 L957.03 480.11 A29 29 0 0 0 951.70 422.60 Z" fill="#045a7e" stroke="#fff" stroke-width="0.8"/><path d="M959.34 492.49 A41.6 41.6 0 0 1 914.73 470.67 L925.93 464.90 A29 29 0 0 0 957.03 480.11 Z" fill="#f0703c" stroke="#fff" stroke-width="0.8"/><path d="M914.73 470.67 A41.6 41.6 0 0 1 951.70 410.00 L951.70 422.60 A29 29 0 0 0 925.93 464.90 Z" fill="#08a79c" stroke="#fff" stroke-width="0.8"/></svg><div class="abs" style="left:45px;top:525.7px;width:979px;height:1.3px;background:#dcdcdc"></div><div id="pop"><div class="pt">Insights</div><div class="da">Dismiss All</div><div class="list"><div class="it" style="top:0px;height:70px"><svg class="ic" viewBox="0 0 20 20"><g fill="none" stroke="#f0703c" stroke-width="0.8"><circle cx="10" cy="9.7" r="8.3"/><ellipse cx="10" cy="9.7" rx="4.2" ry="8.3"/><path d="M10 1.4v16.6M1.7 9.7h16.6M2.8 5.5h14.4M2.8 13.9h14.4"/></g></svg><div class="x"><svg viewBox="0 0 8 8"><path d="M0.7 0.7l6.6 6.6M7.3 0.7L0.7 7.3" stroke="#b4b4b4" stroke-width="0.75" fill="none"/></svg></div><div class="tt" style="top:8px">Geo Performance</div><div class="ds">Connecticut generated above average benchmark results<br>under NEW REDCard Registrations campaign.<br>Opening a dedicated campaign is predicted to increase<br>daily revenue for this Geo by 2.37X.</div></div><div class="it" style="top:70px;height:61px"><svg class="ic" viewBox="0 0 20 20"><g fill="none" stroke="#f0703c" stroke-width="1.25" stroke-linecap="round"><circle cx="12.3" cy="7.6" r="6"/><path d="M8.05 11.85L2.1 17.3"/></g></svg><div class="x"><svg viewBox="0 0 8 8"><path d="M0.7 0.7l6.6 6.6M7.3 0.7L0.7 7.3" stroke="#b4b4b4" stroke-width="0.75" fill="none"/></svg></div><div class="tt" style="top:8px">Competitor Identified</div><div class="ds">Identified thecostcutters.com as a potential competitor<br>to your active campaigns.<br>Scraping domain for relevant opportunities.</div></div><div class="it" style="top:131px;height:60px"><svg class="ic" viewBox="0 0 20 20"><g fill="none" stroke="#f0703c" stroke-width="0.85" stroke-linejoin="round"><path d="M2 6.1L10.1 9.5L18.2 6.1V12L10.1 15.4L2 12Z" fill="#f0703c" fill-opacity="0.12"/><path d="M10.1 2.7L18.2 6.1L10.1 9.5L2 6.1Z" fill="#fff"/><path d="M2 7.6L10.1 11L18.2 7.6M2 9.1L10.1 12.5L18.2 9.1M2 10.6L10.1 14L18.2 10.6"/></g></svg><div class="x"><svg viewBox="0 0 8 8"><path d="M0.7 0.7l6.6 6.6M7.3 0.7L0.7 7.3" stroke="#b4b4b4" stroke-width="0.75" fill="none"/></svg></div><div class="tt" style="top:7px">Channel Opportunity</div><div class="ds">NEW REDCard Registrations campaign is predicted to<br>generate a 168% increase in registrations by adding the<br>Facebook channel.</div></div><div class="it" style="top:191px;height:80px"><svg class="ic" viewBox="0 0 20 20"><path d="M7.9 14.88A7.6 6.6 0 1 0 4.88 13.27L4.3 17.1Z" fill="none" stroke="#f0703c" stroke-width="1.050" stroke-linejoin="round"/></svg><div class="x"><svg viewBox="0 0 8 8"><path d="M0.7 0.7l6.6 6.6M7.3 0.7L0.7 7.3" stroke="#b4b4b4" stroke-width="0.75" fill="none"/></svg></div><div class="tt" style="top:8px">Ad Term Identified</div><div class="ds">Ads from message, REDCard, using the term Rewards<br>perform 422% better compared to ads using the term<br>Savings.<br>Optimizing text creatives accordingly to enhance<br>performance.</div></div><div class="it" style="top:271px;height:80px"><svg class="ic" viewBox="0 0 20 20"><g fill="none" stroke="#f0703c" stroke-width="0.85" stroke-linejoin="round"><path d="M2 6.1L10.1 9.5L18.2 6.1V12L10.1 15.4L2 12Z" fill="#f0703c" fill-opacity="0.12"/><path d="M10.1 2.7L18.2 6.1L10.1 9.5L2 6.1Z" fill="#fff"/><path d="M2 7.6L10.1 11L18.2 7.6M2 9.1L10.1 12.5L18.2 9.1M2 10.6L10.1 14L18.2 10.6"/></g></svg><div class="x"><svg viewBox="0 0 8 8"><path d="M0.7 0.7l6.6 6.6M7.3 0.7L0.7 7.3" stroke="#b4b4b4" stroke-width="0.75" fill="none"/></svg></div><div class="tt" style="top:8px">Bing Potential</div><div class="ds">Organic traffic is showing high potential, with 147%<br>higher average order value &amp; 65% lower bounce rate<br>compared to benchmark.<br>Launching a Bing paid campaign is recommended.</div></div></div><div id="sb"></div></div></body></html>
